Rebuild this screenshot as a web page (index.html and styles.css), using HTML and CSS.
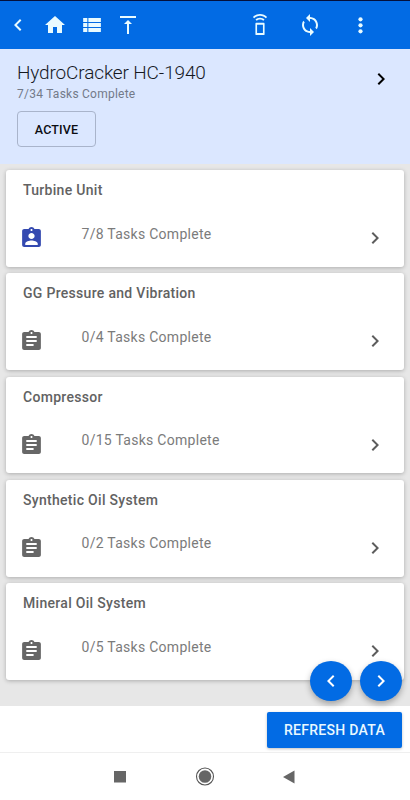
FILE: index.html
```
<!DOCTYPE html>
<html lang="en">
<head>
<meta charset="utf-8">
<title>HydroCracker HC-1940</title>
<link rel="stylesheet" href="styles.css">
</head>
<body>
<svg class="defs" width="0" height="0">
  <symbol id="left" viewBox="0 0 24 24"><path d="M15.41 7.41 14 6l-6 6 6 6 1.41-1.41L10.83 12z"/></symbol>
  <symbol id="right" viewBox="0 0 24 24"><path d="M10 6 8.59 7.41 13.17 12l-4.58 4.59L10 18l6-6z"/></symbol>
  <symbol id="task" viewBox="0 0 24 24" preserveAspectRatio="none"><path d="M19 3h-4.18C14.4 1.84 13.3 1 12 1c-1.3 0-2.4.84-2.82 2H5c-1.1 0-2 .9-2 2v14c0 1.1.9 2 2 2h14c1.1 0 2-.9 2-2V5c0-1.1-.9-2-2-2zm-7 0c.55 0 1 .45 1 1s-.45 1-1 1-1-.45-1-1 .45-1 1-1zm2 14H7v-2h7v2zm3-4H7v-2h10v2zm0-4H7V7h10v2z"/></symbol>
  <symbol id="person" viewBox="0 0 24 24" preserveAspectRatio="none"><path d="M19 3h-4.18C14.4 1.84 13.3 1 12 1c-1.3 0-2.4.84-2.82 2H5c-1.1 0-2 .9-2 2v14c0 1.1.9 2 2 2h14c1.1 0 2-.9 2-2V5c0-1.1-.9-2-2-2zm-7 0c.55 0 1 .45 1 1s-.45 1-1 1-1-.45-1-1 .45-1 1-1zm0 4c1.66 0 3 1.34 3 3s-1.34 3-3 3-3-1.34-3-3 1.34-3 3-3zm6 12H6v-1.4c0-2 4-3.1 6-3.1s6 1.1 6 3.1V19z"/></symbol>
</svg>
<header class="bar">
  <svg class="icon back"><use href="#left"/></svg>
  <svg class="icon home" viewBox="0 0 24 24"><path d="M10 20v-6h4v6h5v-8h3L12 3 2 12h3v8z"/></svg>
  <svg class="icon list" viewBox="0 0 24 24" preserveAspectRatio="none"><path d="M4 14h4v-4H4v4zm0 5h4v-4H4v4zM4 9h4V5H4v4zm5 5h12v-4H9v4zm0 5h12v-4H9v4zM9 5v4h12V5H9z"/></svg>
  <svg class="icon top" viewBox="0 0 24 24"><path d="M8 11h3v10h2V11h3l-4-4-4 4zM4 3v2h16V3H4z"/></svg>
  <svg class="icon remote" viewBox="0 0 24 24"><path d="M7.05 6.05l1.41 1.41C9.37 6.56 10.62 6 12 6s2.63.56 3.54 1.46l1.41-1.41C15.68 4.78 13.93 4 12 4s-3.68.78-4.95 2.05zM12 0C8.96 0 6.21 1.23 4.22 3.22l1.41 1.41C7.26 3.01 9.51 2 12 2s4.74 1.01 6.36 2.64l1.41-1.41C17.79 1.23 15.04 0 12 0zM8 9.5h8c.55 0 1 .45 1 1v11.5c0 .55-.45 1-1 1h-8c-.55 0-1-.45-1-1V10.5c0-.55.45-1 1-1zm.8 2.3v8.900h6.400v-8.900z" fill-rule="evenodd"/></svg>
  <svg class="icon sync" viewBox="0 0 24 24"><path d="M12 4V1L8 5l4 4V6c3.31 0 6 2.69 6 6 0 1.010-.25 1.970-.7 2.800l1.460 1.460C19.540 15.030 20 13.570 20 12c0-4.420-3.580-8-8-8zm0 14c-3.310 0-6-2.690-6-6 0-1.010.25-1.970.7-2.800L5.240 7.740C4.460 8.970 4 10.430 4 12c0 4.420 3.580 8 8 8v3l4-4-4-4v3z"/></svg>
  <svg class="icon more" viewBox="0 0 24 24"><circle cx="12.500" cy="6.300" r="2.100"/><circle cx="12.500" cy="12.300" r="2.100"/><circle cx="12.500" cy="18.300" r="2.100"/></svg>
</header>
<section class="unit">
  <div>
    <h1>HydroCracker HC-1940</h1>
    <p>7/34 Tasks Complete</p>
    <button class="state">ACTIVE</button>
  </div>
  <svg class="icon open"><use href="#right"/></svg>
</section>
<main class="cards">
  <article class="card"><h2>Turbine Unit</h2><div class="row"><svg class="clip active"><use href="#person"/></svg><p>7/8 Tasks Complete</p><svg class="icon go"><use href="#right"/></svg></div></article>
  <article class="card"><h2>GG Pressure and Vibration</h2><div class="row"><svg class="clip"><use href="#task"/></svg><p>0/4 Tasks Complete</p><svg class="icon go"><use href="#right"/></svg></div></article>
  <article class="card"><h2>Compressor</h2><div class="row"><svg class="clip"><use href="#task"/></svg><p>0/15 Tasks Complete</p><svg class="icon go"><use href="#right"/></svg></div></article>
  <article class="card"><h2>Synthetic Oil System</h2><div class="row"><svg class="clip"><use href="#task"/></svg><p>0/2 Tasks Complete</p><svg class="icon go"><use href="#right"/></svg></div></article>
  <article class="card"><h2>Mineral Oil System</h2><div class="row"><svg class="clip"><use href="#task"/></svg><p>0/5 Tasks Complete</p><svg class="icon go"><use href="#right"/></svg></div></article>
  <div class="fabs">
    <button class="fab"><svg class="icon"><use href="#left"/></svg></button>
    <button class="fab"><svg class="icon"><use href="#right"/></svg></button>
  </div>
</main>
<footer class="actions"><button class="refresh">REFRESH DATA</button></footer>
<nav class="system">
  <svg viewBox="0 0 410 47"><path d="M114 18h12v11.500h-12zM294.500 17.500v13L283 24z"/><circle cx="205" cy="23.500" r="6.300"/><circle class="ring" cx="205" cy="23.500" r="8.500"/></svg>
</nav>
</body>
</html>
```
FILE: styles.css
```
* { box-sizing: border-box; }
body {
  margin: 0;
  width: 410px;
  height: 800px;
  overflow: hidden;
  display: flex;
  flex-direction: column;
  background: #fff;
  font-family: Roboto, sans-serif;
}
h1, h2, p { margin: 0; white-space: nowrap; }
button { font: inherit; border: 0; padding: 0; }
.defs { position: absolute; }
.icon { width: 24px; height: 24px; flex: none; fill: currentColor; }

.bar {
  height: 49px;
  flex: none;
  display: flex;
  align-items: center;
  padding-left: 6px;
  border-top: 1px solid #03103c;
  background: #026be4;
  color: #e9fbff;
}
.home { margin-left: 13px; }
.list { margin-left: 12px; width: 25px; }
.top { margin-left: 12px; }
.remote { margin-left: 109px; width: 22px; height: 22px; }
.sync { margin-left: 27px; }
.more { margin-left: 26px; }

.unit {
  height: 115px;
  flex: none;
  display: flex;
  justify-content: space-between;
  padding: 12px 17px 0 17px;
  background: #dbe7ff;
}
.unit h1 { font-size: 19px; line-height: 24px; font-weight: 300; letter-spacing: -.14px; color: #16191f; }
.unit p { font-size: 12px; line-height: 16px; margin-top: 1px; letter-spacing: .24px; color: #737a89; }
.state {
  display: block;
  width: 79px;
  height: 36px;
  margin-top: 9px;
  border: 1px solid #a9b4cb;
  border-radius: 4px;
  background: none;
  font-size: 12.500px;
  font-weight: 500;
  letter-spacing: .15px;
  color: #0b0d12;
}
.open { margin-top: 6px; color: #000; }

.cards {
  position: relative;
  height: 542px;
  flex: none;
  display: flex;
  flex-direction: column;
  gap: 6.500px;
  padding: 6px 5.700px 0 6.300px;
  background: #e7e7e7;
}
.card {
  height: 96.750px;
  flex: none;
  padding: 10px 17.300px 0 15.200px;
  border-radius: 3px;
  background: #fff;
  box-shadow: 0 1px 4px rgba(0, 0, 0, .26);
}
.card h2 { font-size: 14px; line-height: 20px; padding-left: 1.500px; font-weight: 500; letter-spacing: .3px; color: #626262; }
.row { display: flex; align-items: center; height: 24px; margin-top: 26px; }
.clip { width: 25px; height: 24px; margin-left: -2.700px; fill: #676767; }
.clip.active { fill: #3449b0; }
.row p { margin: -9px auto 0 37.700px; font-size: 14px; line-height: 20px; letter-spacing: .28px; color: #7b7b7b; }
.go { color: #5d5d5d; }

.fabs { position: absolute; right: 8px; bottom: 5px; display: flex; gap: 8px; }
.fab {
  width: 42px;
  height: 40px;
  display: grid;
  place-items: center;
  border-radius: 50%;
  background: #026be4;
  color: #fff;
  box-shadow: 0 3px 6px rgba(0, 0, 0, .3);
}

.actions {
  height: 47px;
  flex: none;
  display: flex;
  justify-content: flex-end;
  padding: 6px 8px 0 0;
  border-bottom: 1px solid #efefef;
}
.refresh {
  width: 135px;
  height: 36px;
  border-radius: 2px;
  background: #026be4;
  color: #e9f8ff;
  font-size: 14px;
  font-weight: 500;
  letter-spacing: .3px;
  box-shadow: 0 1px 3px rgba(0, 0, 0, .25);
}
.system { height: 47px; }
.system svg { display: block; width: 410px; height: 47px; fill: #666; }
.system .ring { fill: none; stroke: #555; stroke-width: 1.100; }
```
